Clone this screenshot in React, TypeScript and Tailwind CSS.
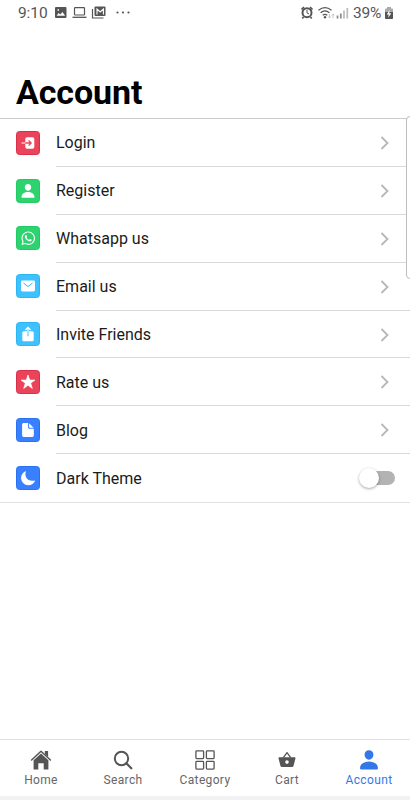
import type { ReactNode } from "react";
import { FaWhatsapp } from "react-icons/fa";

type Row = { label: string; tile: string; icon: ReactNode };

const rows: Row[] = [
  {
    label: "Login",
    tile: "bg-[#eb445a] border-[#d92f4b]",
    icon: (
      <>
        <rect x="9.3" y="6.3" width="9" height="11.5" rx="1.8" fill="#fff" />
        <path d="M6 12h3.3" stroke="#fff" strokeWidth="1.2" strokeLinecap="round" />
        <path d="M9.3 12H15M12.6 9.4 15.2 12l-2.6 2.6" fill="none" stroke="#eb445a" strokeWidth="1.3" />
      </>
    ),
  },
  {
    label: "Register",
    tile: "bg-[#2dd36f] border-[#22c965]",
    icon: (
      <path
        fill="#fff"
        d="M12 4.9c2 0 3.3 1.5 3.2 3.4-.1 2-1.5 3.5-3.2 3.5s-3.1-1.5-3.2-3.5C8.700 6.400 10 4.900 12 4.900zM5.500 18.200c0-3.300 3.200-5.100 6.500-5.100s6.500 1.800 6.500 5.100c0 .4-.3.600-.8.600H6.300c-.5 0-.8-.2-.8-.6z"
      />
    ),
  },
  {
    label: "Whatsapp us",
    tile: "bg-[#2dd36f] border-[#22c965]",
    icon: <FaWhatsapp x="4.500" y="4.500" size={15.5} color="#fff" />,
  },
  {
    label: "Email us",
    tile: "bg-[#3dc2ff] border-[#2cb5f5]",
    icon: (
      <>
        <rect x="5" y="6.500" width="14" height="11" rx="1.400" fill="#fff" />
        <path d="m7.500 9 4.500 3.600L16.500 9" fill="none" stroke="#3bb5ec" strokeWidth="1" />
      </>
    ),
  },
  {
    label: "Invite Friends",
    tile: "bg-[#3dc2ff] border-[#2cb5f5]",
    icon: (
      <>
        <rect x="6.300" y="9.300" width="11.400" height="9.900" rx="1.500" fill="#fff" />
        <path d="M12 9.300v5" stroke="#3dc2ff" strokeWidth="1" />
        <path d="M12 9.300V5.500M9.400 8 12 5.400 14.600 8" fill="none" stroke="#fff" strokeWidth="1.200" />
      </>
    ),
  },
  {
    label: "Rate us",
    tile: "bg-[#eb445a] border-[#d92f4b]",
    icon: (
      <path
        fill="#fff"
        stroke="#fff"
        strokeWidth=".7"
        strokeLinejoin="round"
        d="m12 5 1.700 5.100h5.200l-4.200 3.100 1.600 5.200-4.300-3.200-4.300 3.200 1.600-5.200-4.200-3.100h5.200z"
      />
    ),
  },
  {
    label: "Blog",
    tile: "bg-[#3880ff] border-[#2a70f2]",
    icon: (
      <path
        fill="#fff"
        d="M7.600 5h4.500v4.600c0 .6.500 1.100 1.100 1.100h4.600v6.500c0 1-.8 1.800-1.800 1.800H7.900c-1 0-1.800-.8-1.800-1.800V6.500C6.100 5.700 6.800 5 7.600 5zM13.100 5.200l4.500 4.500h-4c-.3 0-.5-.2-.5-.5z"
      />
    ),
  },
  {
    label: "Dark Theme",
    tile: "bg-[#3880ff] border-[#2a70f2]",
    icon: (
      <path
        fill="#fff"
        d="M9.300 5.300c.2-.3.700 0 .5.400-.3.900-.4 1.700-.4 2.600 0 3.700 3 6.500 6.600 6.500.9 0 1.700-.1 2.500-.4.400-.1.700.2.500.6-1.200 2.500-3.600 4.200-6.500 4.200-4.100 0-7.400-3.200-7.400-7.200 0-3 1.700-5.500 4.200-6.700z"
      />
    ),
  },
];

const tabs: { label: string; icon: ReactNode }[] = [
  {
    label: "Home",
    icon: (
      <>
        <path d="M1.600 11 11 2.300l9.400 8.700" fill="none" stroke="#555" strokeWidth="1.500" strokeLinecap="round" strokeLinejoin="round" />
        <path fill="#555" d="M14.800 2h3.300v6l-3.300-3zM11 4.500l7.400 6.800v9.200h-4.700v-6.200H8.300v6.200H3.600v-9.200z" />
      </>
    ),
  },
  {
    label: "Search",
    icon: (
      <>
        <circle cx="9.500" cy="9.500" r="6.700" fill="none" stroke="#555" strokeWidth="2" />
        <path d="m14.300 14.300 5 5" stroke="#555" strokeWidth="2.200" strokeLinecap="round" />
      </>
    ),
  },
  {
    label: "Category",
    icon: (
      <g fill="none" stroke="#555" strokeWidth="1.300">
        <rect x="1.900" y="1.900" width="7.700" height="7.700" rx=".8" />
        <rect x="12.400" y="1.900" width="7.700" height="7.700" rx=".8" />
        <rect x="1.900" y="12.400" width="7.700" height="7.700" rx=".8" />
        <rect x="12.400" y="12.400" width="7.700" height="7.700" rx=".8" />
      </g>
    ),
  },
  {
    label: "Cart",
    icon: (
      <>
        <path d="m7.300 8.600 3.700-5 3.700 5" fill="none" stroke="#555" strokeWidth="1.300" strokeLinejoin="round" />
        <path
          fill="#555"
          fillRule="evenodd"
          d="M3.300 8.300h15.400c.6 0 .9.500.8 1l-2 7.700c-.2.600-.7 1-1.300 1H5.800c-.6 0-1.100-.4-1.300-1l-2-7.700c-.1-.5.200-1 .8-1zM11 11.300a1.800 1.800 0 1 0 0 3.600 1.800 1.800 0 0 0 0-3.600z"
        />
      </>
    ),
  },
  {
    label: "Account",
    icon: (
      <path
        fill="#3478e8"
        d="M11 1.300c2.700 0 4.500 2 4.400 4.500-.1 2.700-2 4.900-4.400 4.900S6.700 8.500 6.600 5.800C6.500 3.200 8.300 1.300 11 1.300zM2 19.300c0-4.600 4.500-6.900 9-6.900s9 2.300 9 6.900c0 .7-.5 1.200-1.200 1.200H3.200c-.7 0-1.200-.5-1.200-1.200z"
      />
    ),
  },
];

function StatusBar() {
  return (
    <div className="flex h-[26px] shrink-0 items-center justify-between pl-[18px] pr-[16px] text-[#555]">
      <div className="flex items-center">
        <span className="w-[36px] text-[15.500px] leading-[24px] tracking-[-0.1px]">9:10</span>
        <svg width="80" height="16" viewBox="0 0 80 16" fill="none">
          <path fill="#555" fillRule="evenodd" d="M2 2h9.500q1 0 1 1v9q0 1-1 1H2q-1 0-1-1V3q0-1 1-1zM2.600 10.800h8.500L8.500 6.900 6.300 9.600 4.700 8zM3.500 4.200v1.500H5V4.200z" />
          <rect x="20.500" y="2.700" width="10" height="7.300" rx=".7" stroke="#555" strokeWidth="1.200" />
          <path d="M18.500 12.300h14" stroke="#555" strokeWidth="1.300" />
          <rect x="40.500" y="1.500" width="11" height="9.500" rx="1" fill="#555" />
          <path d="M43 9.500V4l3.200 3 3.200-3v5.500" stroke="#fff" strokeWidth="1.100" />
          <path d="M38.500 4v9h11" stroke="#555" strokeWidth="1.200" />
          <g fill="#555">
            <circle cx="63.500" cy="7.500" r="1.100" />
            <circle cx="69" cy="7.500" r="1.100" />
            <circle cx="74.500" cy="7.500" r="1.100" />
          </g>
        </svg>
      </div>
      <div className="flex items-center">
        <svg width="52" height="16" viewBox="0 0 52 16" fill="none">
          <circle cx="6" cy="7.700" r="4.500" stroke="#555" strokeWidth="2" />
          <path d="M.5 4.500 3 2M11.500 4.500 9 2M2.500 12l-1.200 1.500M9.500 12l1.200 1.500" stroke="#555" strokeWidth="1.700" />
          <path d="M6 5V8l2 1" stroke="#555" />
          <g stroke="#555" strokeWidth="1.300">
            <path d="M17.500 5.200q6.500-5 13 0M19.600 7.700q4.400-3.500 8.800 0M21.700 10.200q2.300-1.800 4.600 0" />
          </g>
          <circle cx="24" cy="12.300" r="1.200" fill="#555" />
          <path d="M28.500 9v4M27.300 11.500l1.200 1.500 1.200-1.500M32 13V9M30.800 10.500 32 9l1.200 1.500" stroke="#bbb" strokeWidth=".8" />
          <path d="M36.500 10.500v3M39.800 8.500v5" stroke="#888" strokeWidth="1.700" />
          <path d="M43 5.500v8M46.300 3v10.500" stroke="#bbb" strokeWidth="1.700" />
        </svg>
        <span className="w-[31px] whitespace-nowrap text-[15.500px] leading-[24px] tracking-[-0.2px]">39%</span>
        <svg width="10" height="16" viewBox="0 0 10 16">
          <path fill="#aaa" d="M3 2h4v1.500h1.200q.8 0 .8.800V7H1V4.300q0-.8.800-.8H3z" />
          <path fill="#555" d="M1 7h8v6.200q0 .8-.8.800H1.800q-.8 0-.8-.8z" />
          <path fill="#fff" d="M5.600 5 2.700 9.500h2l-.5 3.200 3.100-4.500h-2z" />
        </svg>
      </div>
    </div>
  );
}

export default function App() {
  return (
    <div className="relative flex h-[800px] w-[410px] flex-col overflow-hidden bg-white font-[Roboto,sans-serif] text-[#1b1b1b]">
      <StatusBar />
      <header className="flex h-[93px] shrink-0 flex-col justify-end border-b border-[#cbcbcb] pb-[6px] pl-4">
        <h1 className="text-[34px] font-bold leading-[40px] tracking-[-0.1px] text-black">Account</h1>
      </header>

      <main className="flex-1">
        <ul className="border-b border-[#e2e2e2]">
          {rows.map((row, i) => (
            <li key={row.label} className="flex h-[47.900px] pl-4">
              <div className={`mt-[11.700px] size-6 shrink-0 overflow-hidden rounded-[3.500px] border ${row.tile}`}>
                <svg className="-ml-px -mt-px" width="24" height="24" viewBox="0 0 24 24">
                  {row.icon}
                </svg>
              </div>
              <div
                className={`ml-4 flex flex-1 items-center justify-between pr-[15px] ${
                  i < rows.length - 1 ? "border-b border-[#d9d9d9]" : ""
                }`}
              >
                <span className="pt-[2px] text-[16px] leading-6">{row.label}</span>
                {i < rows.length - 1 ? (
                  <svg className="mt-px" width="16" height="16" viewBox="0 0 16 16" fill="none">
                    <path d="m2.500 2 6 6-6 6" stroke="#b7b7b7" strokeWidth="1.800" />
                  </svg>
                ) : (
                  <div className="flex h-[14px] w-[27px] items-center rounded-full bg-[#b3b3b3]">
                    <div className="-ml-[9px] size-5 shrink-0 rounded-full bg-white shadow-[0_1px_3px_rgba(0,0,0,0.35)]" />
                  </div>
                )}
              </div>
            </li>
          ))}
        </ul>
      </main>

      <nav className="grid h-[57px] shrink-0 grid-cols-5 border-t border-[#e0e0e0] bg-white">
        {tabs.map((tab) => (
          <div
            key={tab.label}
            className={`flex flex-col items-center pt-[9px] text-[12px] leading-[16px] tracking-[0.350px] ${
              tab.label === "Account" ? "text-[#3478e8]" : "text-[#666]"
            }`}
          >
            <svg width="22" height="22" viewBox="0 0 22 22">
              {tab.icon}
            </svg>
            <span className="mt-px">{tab.label}</span>
          </div>
        ))}
      </nav>
      <div className="h-[4px] shrink-0 bg-[#f2f2f2]" />

      <div className="absolute -right-[6px] top-[116px] h-[163px] w-[10px] rounded-[4px] border border-[#bdbdbd] bg-white" />
    </div>
  );
}
